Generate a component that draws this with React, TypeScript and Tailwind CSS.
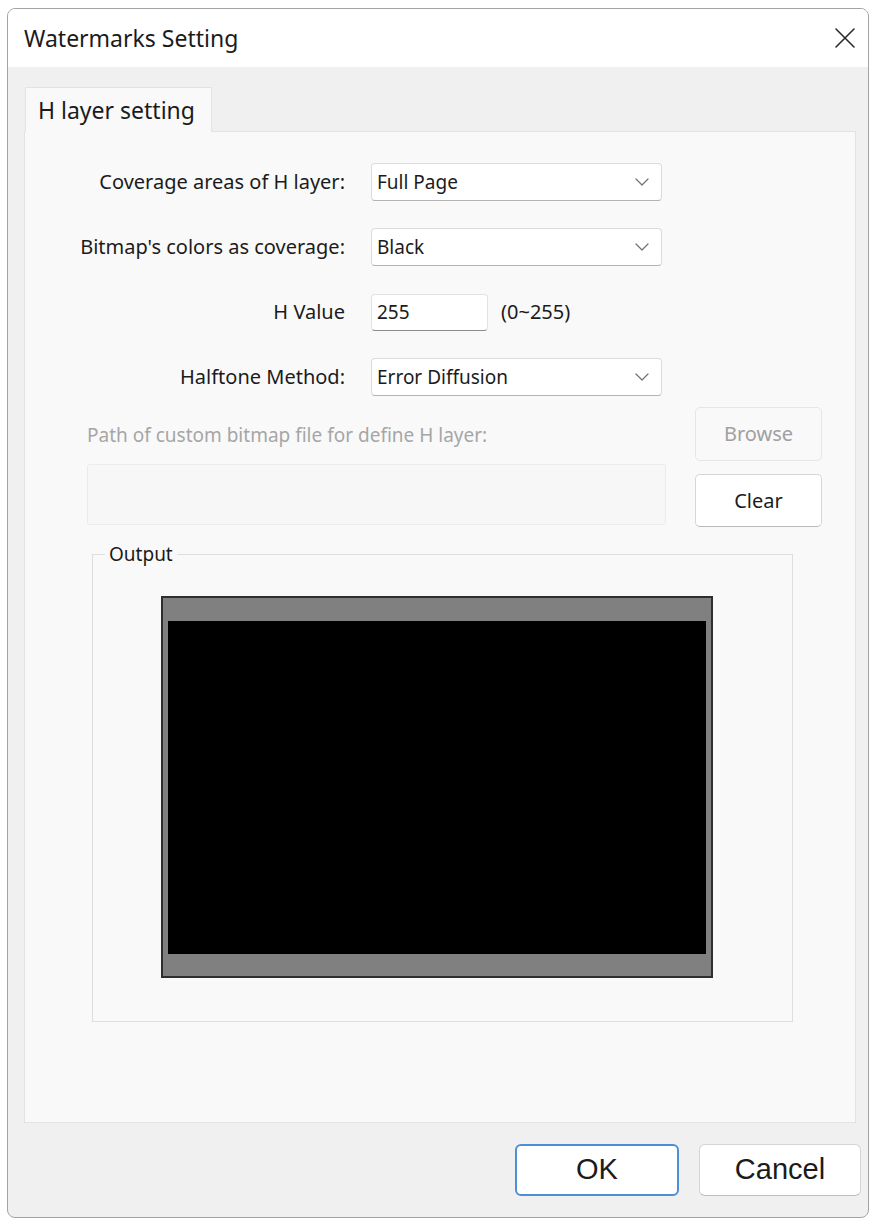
import React from "react";

// --- small pieces ---
const Chevron = () => (
  <svg width="14" height="8" viewBox="0 0 14 8" fill="none" className="shrink-0">
    <path d="M1 1 L7 7 L13 1" stroke="#707070" strokeWidth="1.2" strokeLinecap="round" strokeLinejoin="round" />
  </svg>
);

const Select = ({ value }: { value: string }) => (
  <div className="w-[291px] h-[38px] flex items-center justify-between pl-[5px] pr-[12px] bg-white rounded-[4px] border border-[#dcdcdc] border-b-[#b3b3b3] text-[19px] text-[#1b1b1b]">
    <span>{value}</span>
    <Chevron />
  </div>
);

const Row = ({ label, children }: { label: string; children: React.ReactNode }) => (
  <div className="flex items-center h-[38px]">
    <div className="w-[320px] text-right text-[20px] text-[#1b1b1b]">{label}</div>
    <div className="ml-[26px] flex items-center">{children}</div>
  </div>
);

export default function App() {
  return (
    <div className="min-h-screen bg-white pt-[8px] pl-[7px] font-['Noto_Sans',sans-serif]">
      <div className="w-[862px] h-[1210px] flex flex-col rounded-[8px] border border-[#a3a3a3] overflow-hidden bg-[#f0f0f0]">
        {/* title bar */}
        <div className="h-[58px] shrink-0 bg-white flex items-center justify-between pl-[16px] pr-[11px]">
          <span className="text-[23px] text-[#1b1b1b]">Watermarks Setting</span>
          <svg width="24" height="24" viewBox="0 0 24 24" fill="none">
            <path d="M3 3 L21 21 M21 3 L3 21" stroke="#2b2b2b" strokeWidth="1.6" strokeLinecap="round" />
          </svg>
        </div>

        {/* tab header */}
        <div className="pt-[20px] pl-[17px] flex">
          <div className="w-[187px] h-[45px] flex items-center pl-[12px] bg-[#f9f9f9] border border-b-0 border-[#e3e3e3] text-[23px] text-[#1b1b1b] -mb-px relative">
            H layer setting
          </div>
        </div>

        {/* tab panel */}
        <div className="ml-[16px] mr-[12px] h-[992px] bg-[#f9f9f9] border border-[#e3e3e3]">
          <div className="pt-[31px] flex flex-col gap-[27px]">
            <Row label="Coverage areas of H layer:">
              <Select value="Full Page" />
            </Row>
            <Row label="Bitmap's colors as coverage:">
              <Select value="Black" />
            </Row>
            <Row label="H Value">
              <div className="w-[117px] h-[37px] flex items-center pl-[5px] bg-white rounded-[4px] border border-[#e2e2e2] border-b-[#8c8c8c] text-[19px] text-[#1b1b1b]">
                255
              </div>
              <span className="ml-[13px] text-[20px] text-[#1b1b1b]">(0~255)</span>
            </Row>
            <Row label="Halftone Method:">
              <Select value="Error Diffusion" />
            </Row>
          </div>

          {/* custom bitmap path */}
          <div className="flex mt-[11px] ml-[62px]">
            <div className="w-[579px] flex flex-col">
              <div className="mt-[16px] leading-[24px] text-[19px] text-[#a6a6a6] whitespace-nowrap">
                Path of custom bitmap file for define H layer:
              </div>
              <div className="mt-[17px] h-[61px] bg-[#f7f7f7] border border-[#ebebeb] rounded-[3px]" />
            </div>
            <div className="ml-[29px] flex flex-col gap-[13px]">
              <div className="w-[127px] h-[54px] flex items-center justify-center rounded-[5px] bg-[#f9f9f9] border border-[#e6e6e6] text-[20px] text-[#a0a0a0]">
                Browse
              </div>
              <div className="w-[127px] h-[53px] flex items-center justify-center rounded-[5px] bg-white border border-[#d6d6d6] border-b-[#b9b9b9] text-[20px] text-[#1b1b1b]">
                Clear
              </div>
            </div>
          </div>

          {/* output group */}
          <div className="relative mt-[27px] ml-[67px] w-[701px] h-[468px] border border-[#dedede]">
            <span className="absolute -top-[15px] left-[12px] px-[4px] bg-[#f9f9f9] text-[19px] leading-[28px] text-[#1b1b1b]">
              Output
            </span>
            <div className="mt-[41px] ml-[68px] w-[552px] h-[382px] flex bg-[#808080] border-2 border-[#2e2e2e] pl-[5px] pr-[5px] pt-[23px] pb-[22px]">
              <div className="flex-1 bg-black" />
            </div>
          </div>
        </div>

        {/* footer */}
        <div className="mt-[21px] flex justify-end gap-[20px] pr-[7px] font-['Liberation_Sans',sans-serif]">
          <div className="w-[164px] h-[52px] flex items-center justify-center rounded-[6px] bg-white border-2 border-[#4c8fd6] text-[29px] text-[#1b1b1b]">
            OK
          </div>
          <div className="w-[162px] h-[52px] flex items-center justify-center rounded-[6px] bg-white border border-[#d4d4d4] border-b-[#bdbdbd] text-[29px] text-[#1b1b1b]">
            Cancel
          </div>
        </div>
      </div>
    </div>
  );
}
